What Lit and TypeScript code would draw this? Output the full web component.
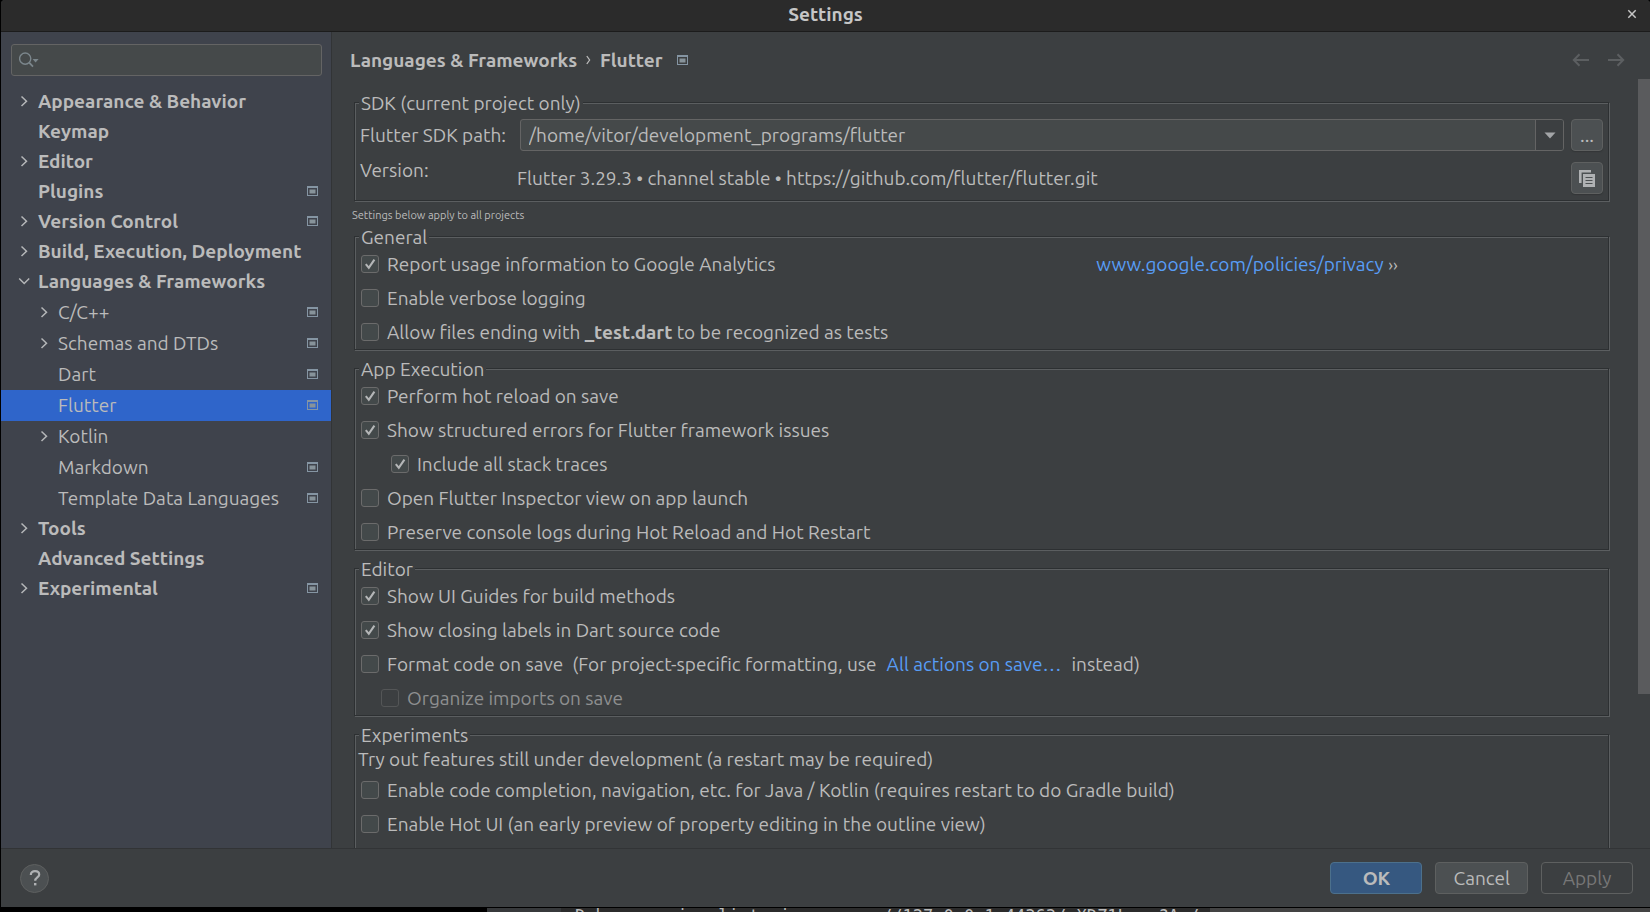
import { LitElement, html, css, svg, nothing, TemplateResult } from "lit";
import { customElement, state } from "lit/decorators.js";
import { classMap } from "lit/directives/class-map.js";

type TreeRow = { label: string; child?: boolean; arrow?: "right" | "down"; project?: boolean };

const TREE: TreeRow[] = [
  { label: "Appearance & Behavior", arrow: "right" },
  { label: "Keymap" },
  { label: "Editor", arrow: "right" },
  { label: "Plugins", project: true },
  { label: "Version Control", arrow: "right", project: true },
  { label: "Build, Execution, Deployment", arrow: "right" },
  { label: "Languages & Frameworks", arrow: "down" },
  { label: "C/C++", child: true, arrow: "right", project: true },
  { label: "Schemas and DTDs", child: true, arrow: "right", project: true },
  { label: "Dart", child: true, project: true },
  { label: "Flutter", child: true, project: true },
  { label: "Kotlin", child: true, arrow: "right" },
  { label: "Markdown", child: true, project: true },
  { label: "Template Data Languages", child: true, project: true },
  { label: "Tools", arrow: "right" },
  { label: "Advanced Settings" },
  { label: "Experimental", arrow: "right", project: true },
];

const projectIcon = html`<svg class="project" width="11" height="10" viewBox="0 0 11 10" aria-hidden="true">
  <path fill="#8595a3" fill-rule="evenodd" d="M0 0h11v10H0zM1 2v7h9V2z" />
  <rect x="2.5" y="3.5" width="6" height="4" fill="#87939a" />
</svg>`;

const chevron = (dir: "right" | "down") => html`<svg width="12" height="12" viewBox="0 0 12 12" aria-hidden="true">
  ${dir === "right"
    ? svg`<path d="M3.5 1.5 8.5 6.2 3.5 11" fill="none" stroke="#b4b6b8" stroke-width="1.5" />`
    : svg`<path d="M1.2 3.5 6.2 8.5 11.2 3.5" fill="none" stroke="#b4b6b8" stroke-width="1.5" />`}
</svg>`;

@customElement("app-root")
export class AppRoot extends LitElement {
  @state() private selected = "Flutter";

  static styles = css`
    :host {
      display: flex;
      flex-direction: column;
      height: 100vh;
      overflow: hidden;
      background: #000;
      color: #bbbbbb;
      font: 19px/22px Ubuntu, "Noto Sans", sans-serif;
      white-space: nowrap;
    }
    * {
      box-sizing: border-box;
    }
    button,
    input {
      font: inherit;
      color: inherit;
      margin: 0;
    }
    a {
      color: #589df6;
      text-decoration: none;
    }
    .window {
      flex: 1;
      min-height: 0;
      display: flex;
      flex-direction: column;
      margin-left: 1px;
      background: #3c3f41;
      border-radius: 4px 4px 0 0;
      overflow: hidden;
    }
    .titlebar {
      display: grid;
      grid-template-columns: 36px 1fr 36px;
      align-items: center;
      height: 32px;
      padding-bottom: 4px;
      background: #2b2b2b;
      border-bottom: 1px solid #1c1c1c;
      color: #c6c6c6;
    }
    .titlebar h1 {
      margin: 0;
      font-size: 19px;
      text-align: center;
    }
    .plain {
      display: flex;
      align-items: center;
      justify-content: center;
      padding: 0;
      border: 0;
      background: none;
    }
    .body {
      flex: 1;
      min-height: 0;
      display: flex;
    }
    .sidebar {
      width: 331px;
      flex: none;
      background: #3f434c;
      border-right: 1px solid #323436;
    }
    .search {
      display: flex;
      align-items: center;
      gap: 4px;
      height: 32px;
      margin: 12px 9px 11px 10px;
      padding: 0 7px;
      border: 1px solid #646464;
      border-radius: 3px;
      background: #45494a;
    }
    .search input {
      flex: 1;
      min-width: 0;
      border: 0;
      outline: 0;
      background: none;
    }
    .tree {
      list-style: none;
      margin: 0;
      padding: 0;
    }
    .row {
      display: flex;
      align-items: center;
      gap: 7px;
      height: 30px;
      padding: 0 13px 2px 17px;
      color: inherit;
      font-weight: 700;
    }
    .row.child {
      height: 31px;
      padding-left: 37px;
      font-weight: 400;
    }
    .row.selected {
      background: #2f65ca;
    }
    .twist {
      display: flex;
      width: 13px;
      flex: none;
    }
    .name {
      flex: 1;
    }
    .main {
      flex: 1;
      min-width: 0;
      display: flex;
      flex-direction: column;
    }
    .crumbs {
      display: flex;
      align-items: center;
      height: 47px;
      padding: 9px 25px 0 18px;
    }
    .crumbs h2 {
      display: flex;
      align-items: center;
      gap: 9px;
      margin: 0;
      font-size: 19px;
    }
    .crumbs .project {
      margin: 0 0 0 14px;
    }
    .history {
      display: flex;
      gap: 17px;
      margin-left: auto;
    }
    .scroller {
      flex: 1;
      min-height: 0;
      display: flex;
      overflow: hidden;
    }
    .page {
      flex: 1;
      min-width: 0;
      display: flex;
      flex-direction: column;
      padding: 12px 29px 0 22px;
    }
    .track {
      width: 12px;
    }
    .thumb {
      height: 80%;
      background: #5a5b5d;
    }
    fieldset {
      flex: none;
      min-width: 0;
      margin: 0 0 7px;
      padding: 0 5px;
      border: 1px solid #2d3032;
      box-shadow: 1px 1px 0 #5b5e60, inset 1px 1px 0 #5b5e60;
    }
    legend {
      height: 22px;
      margin-left: -1px;
      padding: 1px 2px 0;
      line-height: 22px;
      background: #3c3f41;
    }
    .sdk {
      display: grid;
      grid-template-columns: 160px 1fr auto;
      height: 87px;
      padding-top: 6px;
      grid-template-rows: 43px 32px;
    }
    .sdk > label {
      line-height: 32px;
    }
    .sdk > .term {
      line-height: 16px;
    }
    .sdk > .release {
      line-height: 32px;
      margin-left: -3px;
    }
    .combo {
      display: flex;
      height: 32px;
      margin-right: 7px;
      border: 1px solid #646464;
      border-radius: 3px;
      background: #45494a;
      overflow: hidden;
    }
    .combo input {
      flex: 1;
      min-width: 0;
      padding: 0 8px;
      border: 0;
      outline: 0;
      background: none;
    }
    .combo .plain {
      width: 28px;
      border-left: 1px solid #646464;
      background: #3c3f41;
    }
    .square {
      display: flex;
      align-items: center;
      justify-content: center;
      width: 32px;
      height: 32px;
      padding: 0;
      border: 1px solid #5e6060;
      border-radius: 4px;
      background: #4c5052;
      box-shadow: 0 1px 1px #333638;
    }
    .note {
      flex: none;
      height: 17px;
      margin-left: -2px;
      font-size: 11px;
      line-height: 15px;
    }
    .line {
      display: flex;
      align-items: center;
      height: 34px;
    }
    .line label {
      display: flex;
      align-items: center;
    }
    .line label span {
      white-space: pre;
    }
    .line input {
      appearance: none;
      flex: none;
      width: 18px;
      height: 18px;
      margin: 0 8px 0 1px;
      border: 1px solid #6b6b6b;
      border-radius: 3px;
      background: #43494a;
    }
    .line input:checked {
      background: #43494a
        url("data:image/svg+xml,%3Csvg xmlns='http://www.w3.org/2000/svg' viewBox='0 0 16 16'%3E%3Cpath d='M3.8 8.2 6.8 11.8 12.4 3.6' fill='none' stroke='%23b4b6b7' stroke-width='2.1'/%3E%3C/svg%3E")
        center / 16px 16px;
    }
    .deep {
      padding-left: 30px;
    }
    .mid {
      padding-left: 20px;
    }
    .disabled {
      color: #8e8f90;
    }
    .disabled input {
      border-color: #545657;
      background: none;
    }
    .split {
      display: grid;
      grid-template-columns: 59% 1fr;
      column-gap: 3px;
    }
    .more {
      font-size: 17px;
    }
    .hint {
      margin: 0 0 0 -2px;
      line-height: 28px;
    }
    .around {
      display: flex;
      gap: 10px;
      margin-left: 9px;
    }
    .footer {
      display: flex;
      align-items: center;
      gap: 13px;
      height: 59px;
      padding: 0 17px 0 19px;
      border-top: 1px solid #323436;
    }
    .help {
      display: flex;
      align-items: center;
      justify-content: center;
      width: 29px;
      height: 29px;
      margin-right: auto;
      padding: 0;
      border: 1px solid #5e6060;
      border-radius: 50%;
      background: #4c5052;
    }
    .action {
      min-width: 92px;
      height: 32px;
      padding: 0 17px;
      border: 1px solid #5e6060;
      border-radius: 4px;
      background: #4c5052;
      line-height: 28px;
    }
    .primary {
      border-color: #4c708c;
      background: #365880;
      font-weight: 700;
    }
    .action:disabled {
      background: none;
      color: #777777;
    }
    .console {
      flex: none;
      display: grid;
      grid-template-columns: 487px 74px auto 1fr;
      height: 5px;
      padding-top: 1px;
      overflow: hidden;
      font: 17px/16px "DejaVu Sans Mono", monospace;
    }
    .gutter {
      background: #37393b;
    }
    .log {
      height: 16px;
      padding-left: 14px;
      background: #2b2b2b;
    }
    .rest {
      background: #434343;
    }
  `;

  private check(text: string | TemplateResult, checked = false, extra = "", after: unknown = nothing) {
    return html`<div class="line ${extra}">
      <label><input type="checkbox" .checked=${checked} ?disabled=${extra.includes("disabled")} /><span>${text}</span></label>${after}
    </div>`;
  }

  private pick(e: Event, label: string) {
    e.preventDefault();
    this.selected = label;
  }

  render() {
    return html`
      <div class="window">
        <header class="titlebar">
          <span></span>
          <h1>Settings</h1>
          <button class="plain" aria-label="Close">
            <svg width="10" height="10" viewBox="0 0 10 10"><path d="M1.3 1.3l7.4 7.4M8.7 1.3 1.3 8.7" stroke="#c6c6c6" stroke-width="1.5" /></svg>
          </button>
        </header>
        <div class="body">
          <nav class="sidebar">
            <div class="search">
              <svg width="20" height="18" viewBox="0 0 20 18" fill="none" aria-hidden="true">
                <circle cx="6.2" cy="7.6" r="5.6" stroke="#7b868c" stroke-width="1.4" />
                <path d="M10.2 11.6 14 15.6" stroke="#7b868c" stroke-width="1.8" />
                <path d="M13.6 8h6l-3 3.6z" fill="#7b868c" />
              </svg>
              <input type="text" aria-label="Search settings" />
            </div>
            <ul class="tree">
              ${TREE.map(
                (r) => html`<li>
                  <a href="#" class=${classMap({ row: true, child: !!r.child, selected: r.label === this.selected })} @click=${(e: Event) => this.pick(e, r.label)}>
                    <span class="twist">${r.arrow ? chevron(r.arrow) : nothing}</span><span class="name">${r.label}</span>${r.project ? projectIcon : nothing}
                  </a>
                </li>`
              )}
            </ul>
          </nav>
          <main class="main">
            <div class="crumbs">
              <h2><span>Languages &amp; Frameworks</span><svg width="5" height="10" viewBox="0 0 5 10"><path d="M.8 1 3.6 5 .8 9" fill="none" stroke="#bbb" stroke-width="1.3" /></svg><span>Flutter</span></h2>
              ${projectIcon}
              <div class="history">
                <button class="plain" aria-label="Back" disabled>
                  <svg width="18" height="14" viewBox="0 0 18 14" fill="none" stroke="#5c5f61" stroke-width="2"><path d="M7.5 1.2 1.8 7l5.7 5.8M2 7h15" /></svg>
                </button>
                <button class="plain" aria-label="Forward" disabled>
                  <svg width="18" height="14" viewBox="0 0 18 14" fill="none" stroke="#5c5f61" stroke-width="2"><path d="M10.5 1.2 16.2 7l-5.7 5.8M16 7H1" /></svg>
                </button>
              </div>
            </div>
            <div class="scroller">
              <div class="page">
                <fieldset>
                  <legend>SDK (current project only)</legend>
                  <div class="sdk">
                    <label for="sdk-path">Flutter SDK path:</label>
                    <div class="combo">
                      <input id="sdk-path" type="text" value="/home/vitor/development_programs/flutter" />
                      <button class="plain" aria-label="Recent paths">
                        <svg width="12" height="7" viewBox="0 0 12 7"><path d="M.5.5h11L6 6.5z" fill="#a3a5a7" /></svg>
                      </button>
                    </div>
                    <button class="square" aria-label="Browse">...</button>
                    <span class="term">Version:</span>
                    <span class="release">Flutter 3.29.3 • channel stable • https://github.com/flutter/flutter.git</span>
                    <button class="square" aria-label="Copy">
                      <svg width="16" height="17" viewBox="0 0 16 17">
                        <path d="M0 0h12v2.6H2.6V13H0z" fill="#afb1b3" />
                        <path d="M4 4h12v13H4z" fill="#afb1b3" />
                        <path d="M6.5 7.5h7M6.5 10.5h7M6.5 13.5h7" stroke="#4c5052" stroke-width="1.2" />
                      </svg>
                    </button>
                  </div>
                </fieldset>
                <div class="note">Settings below apply to all projects</div>
                <fieldset>
                  <legend>General</legend>
                  ${this.check("Report usage information to Google Analytics", true, "split", html`<span><a href="#">www.google.com/policies/privacy</a> <span class="more">››</span></span>`)}
                  ${this.check("Enable verbose logging")}
                  ${this.check(html`Allow files ending with <b>_test.dart</b> to be recognized as tests`)}
                </fieldset>
                <fieldset>
                  <legend>App Execution</legend>
                  ${this.check("Perform hot reload on save", true)}
                  ${this.check("Show structured errors for Flutter framework issues", true)}
                  ${this.check("Include all stack traces", true, "deep")}
                  ${this.check("Open Flutter Inspector view on app launch")}
                  ${this.check("Preserve console logs during Hot Reload and Hot Restart")}
                </fieldset>
                <fieldset>
                  <legend>Editor</legend>
                  ${this.check("Show UI Guides for build methods", true)}
                  ${this.check("Show closing labels in Dart source code", true)}
                  ${this.check("Format code on save", false, "", html`<span class="around"><span>(For project-specific formatting, use</span><a href="#">All actions on save…</a><span>instead)</span></span>`)}
                  ${this.check("Organize imports on save", false, "mid disabled")}
                </fieldset>
                <fieldset>
                  <legend>Experiments</legend>
                  <p class="hint">Try out features still under development (a restart may be required)</p>
                  ${this.check("Enable code completion, navigation, etc. for Java / Kotlin (requires restart to do Gradle build)")}
                  ${this.check("Enable Hot UI (an early preview of property editing in the outline view)")}
                  <div class="line"></div>
                </fieldset>
              </div>
              <div class="track"><div class="thumb"></div></div>
            </div>
          </main>
        </div>
        <footer class="footer">
          <button class="help" aria-label="Help">
            <svg width="12" height="16" viewBox="0 0 12 16" fill="none"><path d="M1.8 5C1.8 2.6 3.6 1.2 6 1.2s4.2 1.3 4.2 3.5c0 2.6-4 2.9-4 6" stroke="#afb1b3" stroke-width="2.2" /><path d="M5 13h2.4v2.4H5z" fill="#afb1b3" /></svg>
          </button>
          <button class="action primary">OK</button>
          <button class="action">Cancel</button>
          <button class="action" disabled>Apply</button>
        </footer>
      </div>
      <div class="console">
        <span></span>
        <span class="gutter"></span>
        <span class="log">Debug service listening on ws://127.0.0.1:44363/wXDZ1Lsxs?A=/w</span>
        <span class="rest"></span>
      </div>
    `;
  }
}
